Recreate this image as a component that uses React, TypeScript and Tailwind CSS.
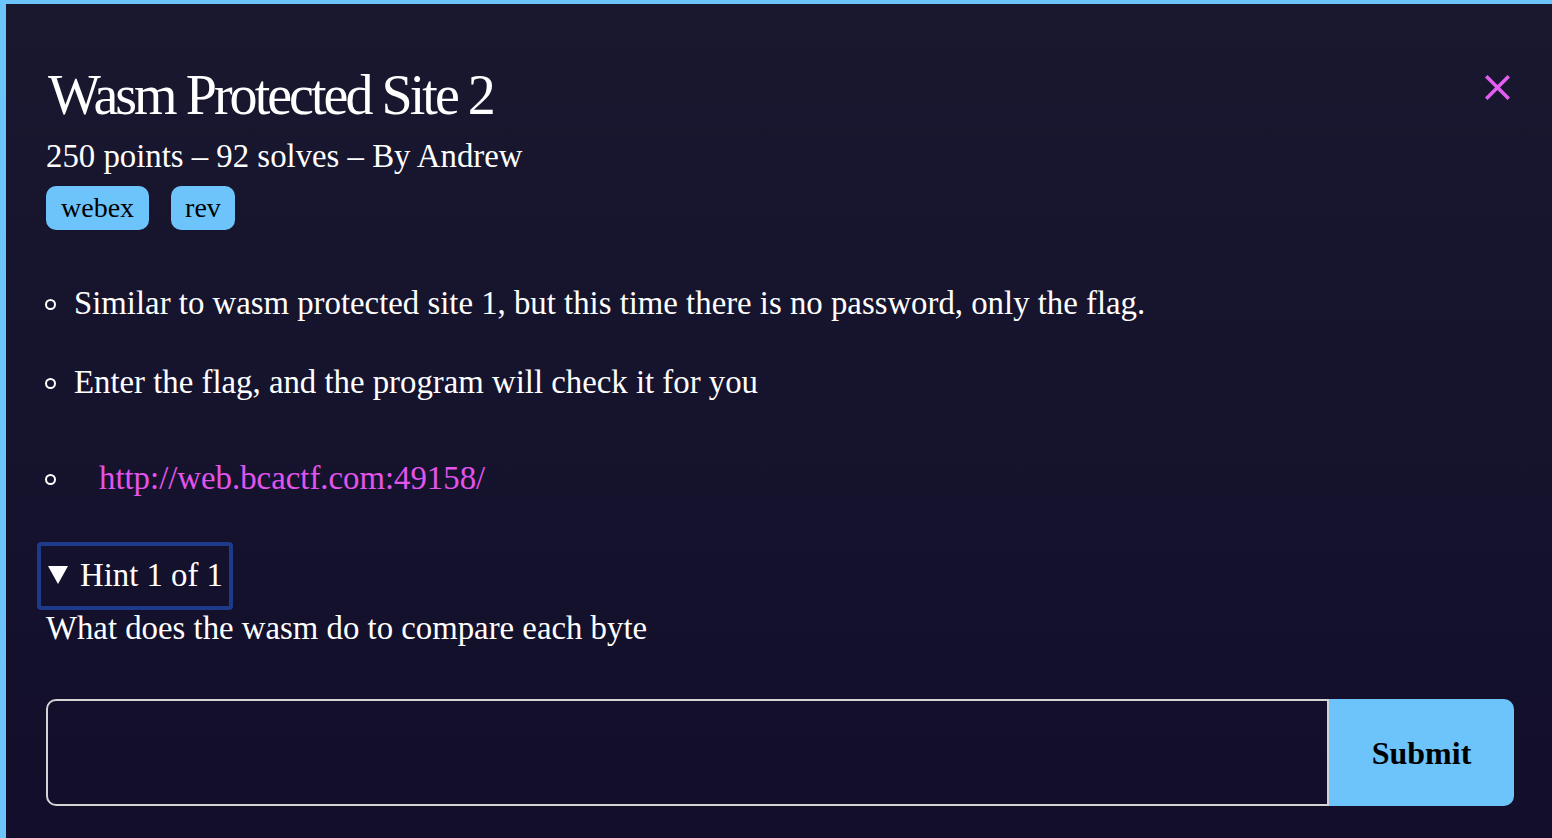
import React from "react";

function Circle() {
  return <span className="inline-block shrink-0 w-[11px] h-[11px] rounded-full border-2 border-white mr-[18px] ml-[-1px] mt-[3px]"></span>;
}

export default function App() {
  return (
    <div
      className="w-[1552px] h-[838px] overflow-hidden border-t-4 border-l-[6px] border-[#6cc4fb] bg-gradient-to-b from-[#19182f] to-[#120e2b] text-white"
      style={{ fontFamily: '"Liberation Serif", "Times New Roman", serif' }}
    >
      <div className="relative pl-[40px] pr-[38px] pt-[59px]">
        <button className="absolute right-[42px] top-[71px]">
          <svg width="25" height="25" viewBox="0 0 25 25" fill="none">
            <path d="M2.5 2.5L22.5 22.5M22.5 2.5L2.5 22.5" stroke="#e35ef0" strokeWidth="3.6" strokeLinecap="square" />
          </svg>
        </button>
        <h1 className="text-[56px] leading-[64px] tracking-[-0.053em] ml-[2px]">Wasm Protected Site 2</h1>
        <div className="text-[32.8px] leading-[38px] mt-[10px]">250 points – 92 solves – By Andrew</div>
        <div className="flex gap-[22px] mt-[11px]">
          <span className="h-[44px] px-[15px] rounded-[10px] bg-[#6cc4fb] text-black text-[28px] leading-[44px]">webex</span>
          <span className="h-[44px] px-[14px] rounded-[10px] bg-[#6cc4fb] text-black text-[28px] leading-[44px]">rev</span>
        </div>
        <ul className="mt-[54px] text-[32.8px] leading-[38px]">
          <li className="mb-[41px] flex items-center">
            <Circle />
            <span>Similar to wasm protected site 1, but this time there is no password, only the flag.</span>
          </li>
          <li className="mb-[58px] flex items-center">
            <Circle />
            <span>Enter the flag, and the program will check it for you</span>
          </li>
          <li className="flex items-center">
            <Circle />
            <span className="inline-block w-[25px]"></span>
            <a className="text-[#e254ec]">http://web.bcactf.com:49158/</a>
          </li>
        </ul>
        <div className="mt-[45px] ml-[-9px] inline-flex items-center h-[68px] pl-[7px] pr-[6px] border-4 border-[#1e3a8a] rounded-[4px] text-[32.8px]">
          <svg width="20" height="18" viewBox="0 0 20 18" className="mr-[12px] mt-[-2px]">
            <path d="M0 0H20L10 18Z" fill="white" />
          </svg>
          <span>Hint 1 of 1</span>
        </div>
        <div className="text-[32.8px] leading-[38px] mt-[-1px]">What does the wasm do to compare each byte</div>
        <div className="flex mt-[52px] h-[107px]">
          <input className="flex-1 bg-transparent border-2 border-[#d4d4d4] rounded-l-[10px] outline-none" />
          <button className="w-[185px] bg-[#6cc4fb] rounded-r-[10px] text-black font-bold text-[32px]">Submit</button>
        </div>
      </div>
    </div>
  );
}
